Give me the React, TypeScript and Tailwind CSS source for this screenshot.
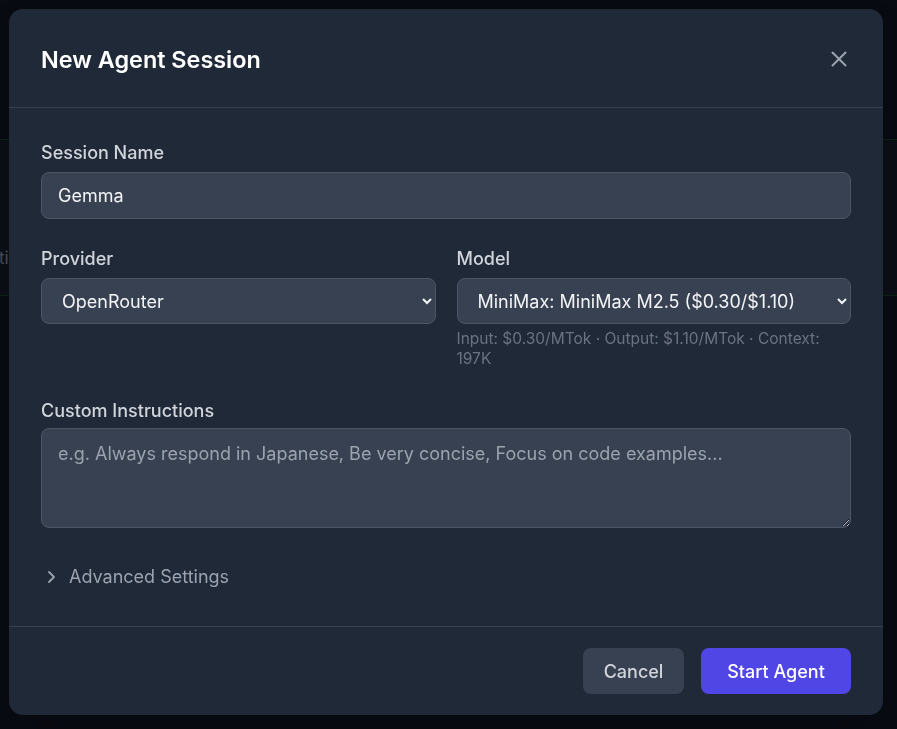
import { useState } from "react";

function CloseIcon() {
  return (
    <svg width="16" height="16" viewBox="0 0 16 16" fill="none" stroke="currentColor" strokeWidth="2" strokeLinecap="round">
      <line x1="1.5" y1="1.5" x2="14.5" y2="14.5" />
      <line x1="14.5" y1="1.5" x2="1.5" y2="14.5" />
    </svg>
  );
}

function ChevronRight() {
  return (
    <svg width="10" height="14" viewBox="0 0 10 14" fill="none" stroke="currentColor" strokeWidth="1.8" strokeLinecap="round" strokeLinejoin="round">
      <polyline points="3,2 8,7 3,12" />
    </svg>
  );
}

export default function App() {
  const [name, setName] = useState("Gemma");
  const [provider, setProvider] = useState("openrouter");
  const [model, setModel] = useState("minimax-m2.5");
  const [instructions, setInstructions] = useState("");

  return (
    <div className="relative min-h-screen w-full overflow-hidden bg-[#080b12] font-['Inter',sans-serif]">
      {/* page behind the backdrop */}
      <div className="pt-[139px]">
        <div className="h-[157px] border-y border-[#0e2318] bg-[#0b0f15] pt-[106px]">
          <span className="ml-[-1px] block text-[17px] leading-6 text-[#4b5059]">tive</span>
        </div>
      </div>

      {/* Modal */}
      <div className="fixed inset-0 p-[9px]">
        <div className="flex h-[706px] w-[874px] flex-col rounded-[14px] bg-[#1f2937] shadow-2xl">
          {/* Header */}
          <div className="flex h-[99px] shrink-0 items-center justify-between border-b border-[#374151] pl-8 pr-[36px]">
            <h2 className="mt-[3px] text-[23.4px] font-semibold text-white">New Agent Session</h2>
            <button className="mt-[1px] text-[#9ca3af]">
              <CloseIcon />
            </button>
          </div>

          {/* Body */}
          <div className="flex-1 px-8 pt-[33px]">
            <label className="mb-[7px] block text-[18px] font-medium leading-6 text-[#d1d5db]">Session Name</label>
            <input
              value={name}
              onChange={(e) => setName(e.target.value)}
              className="block h-[47px] w-full rounded-lg border border-[#4b5563] bg-[#374151] px-4 text-[18px] text-[#f3f4f6] outline-none"
            />

            <div className="mt-[28px] grid grid-cols-2 gap-x-[21px]">
              <div>
                <label className="mb-[7px] block text-[18px] font-medium leading-6 text-[#d1d5db]">Provider</label>
                <select
                  value={provider}
                  onChange={(e) => setProvider(e.target.value)}
                  className="block h-[46px] w-full rounded-lg border border-[#4b5563] bg-[#374151] px-4 text-[18px] text-[#f3f4f6] outline-none"
                >
                  <option value="openrouter">OpenRouter</option>
                  <option value="anthropic">Anthropic</option>
                  <option value="openai">OpenAI</option>
                </select>
              </div>
              <div>
                <label className="mb-[7px] block text-[18px] font-medium leading-6 text-[#d1d5db]">Model</label>
                <select
                  value={model}
                  onChange={(e) => setModel(e.target.value)}
                  className="block h-[46px] w-full rounded-lg border border-[#4b5563] bg-[#374151] px-4 text-[18px] text-[#f3f4f6] outline-none"
                >
                  <option value="minimax-m2.5">MiniMax: MiniMax M2.5 ($0.30/$1.10)</option>
                </select>
                <p className="mt-[5px] text-[15.5px] leading-5 text-[#6b7280]">
                  Input: $0.30/MTok · Output: $1.10/MTok · Context: 197K
                </p>
              </div>
            </div>

            <label className="mb-[5px] mt-[30px] block text-[18px] font-medium leading-6 text-[#d1d5db]">
              Custom Instructions
            </label>
            <textarea
              value={instructions}
              onChange={(e) => setInstructions(e.target.value)}
              placeholder="e.g. Always respond in Japanese, Be very concise, Focus on code examples..."
              className="block h-[100px] w-full rounded-lg border border-[#4b5563] bg-[#374151] px-4 py-3 text-[18px] leading-[26px] text-[#f3f4f6] outline-none placeholder:text-[#9ca3af]"
            />

            <button className="mt-[35px] flex items-center gap-[13px] pl-[5px] text-[18px] text-[#9ca3af]">
              <ChevronRight />
              Advanced Settings
            </button>
          </div>

          {/* Footer */}
          <div className="flex h-[89px] shrink-0 items-center justify-end gap-[17px] border-t border-[#374151] px-8">
            <button className="h-[46px] w-[101px] rounded-lg bg-[#374151] text-[18px] font-medium text-[#d1d5db]">
              Cancel
            </button>
            <button className="h-[46px] w-[150px] rounded-lg bg-[#4f46e5] text-[18px] font-medium text-white">
              Start Agent
            </button>
          </div>
        </div>
      </div>
    </div>
  );
}
